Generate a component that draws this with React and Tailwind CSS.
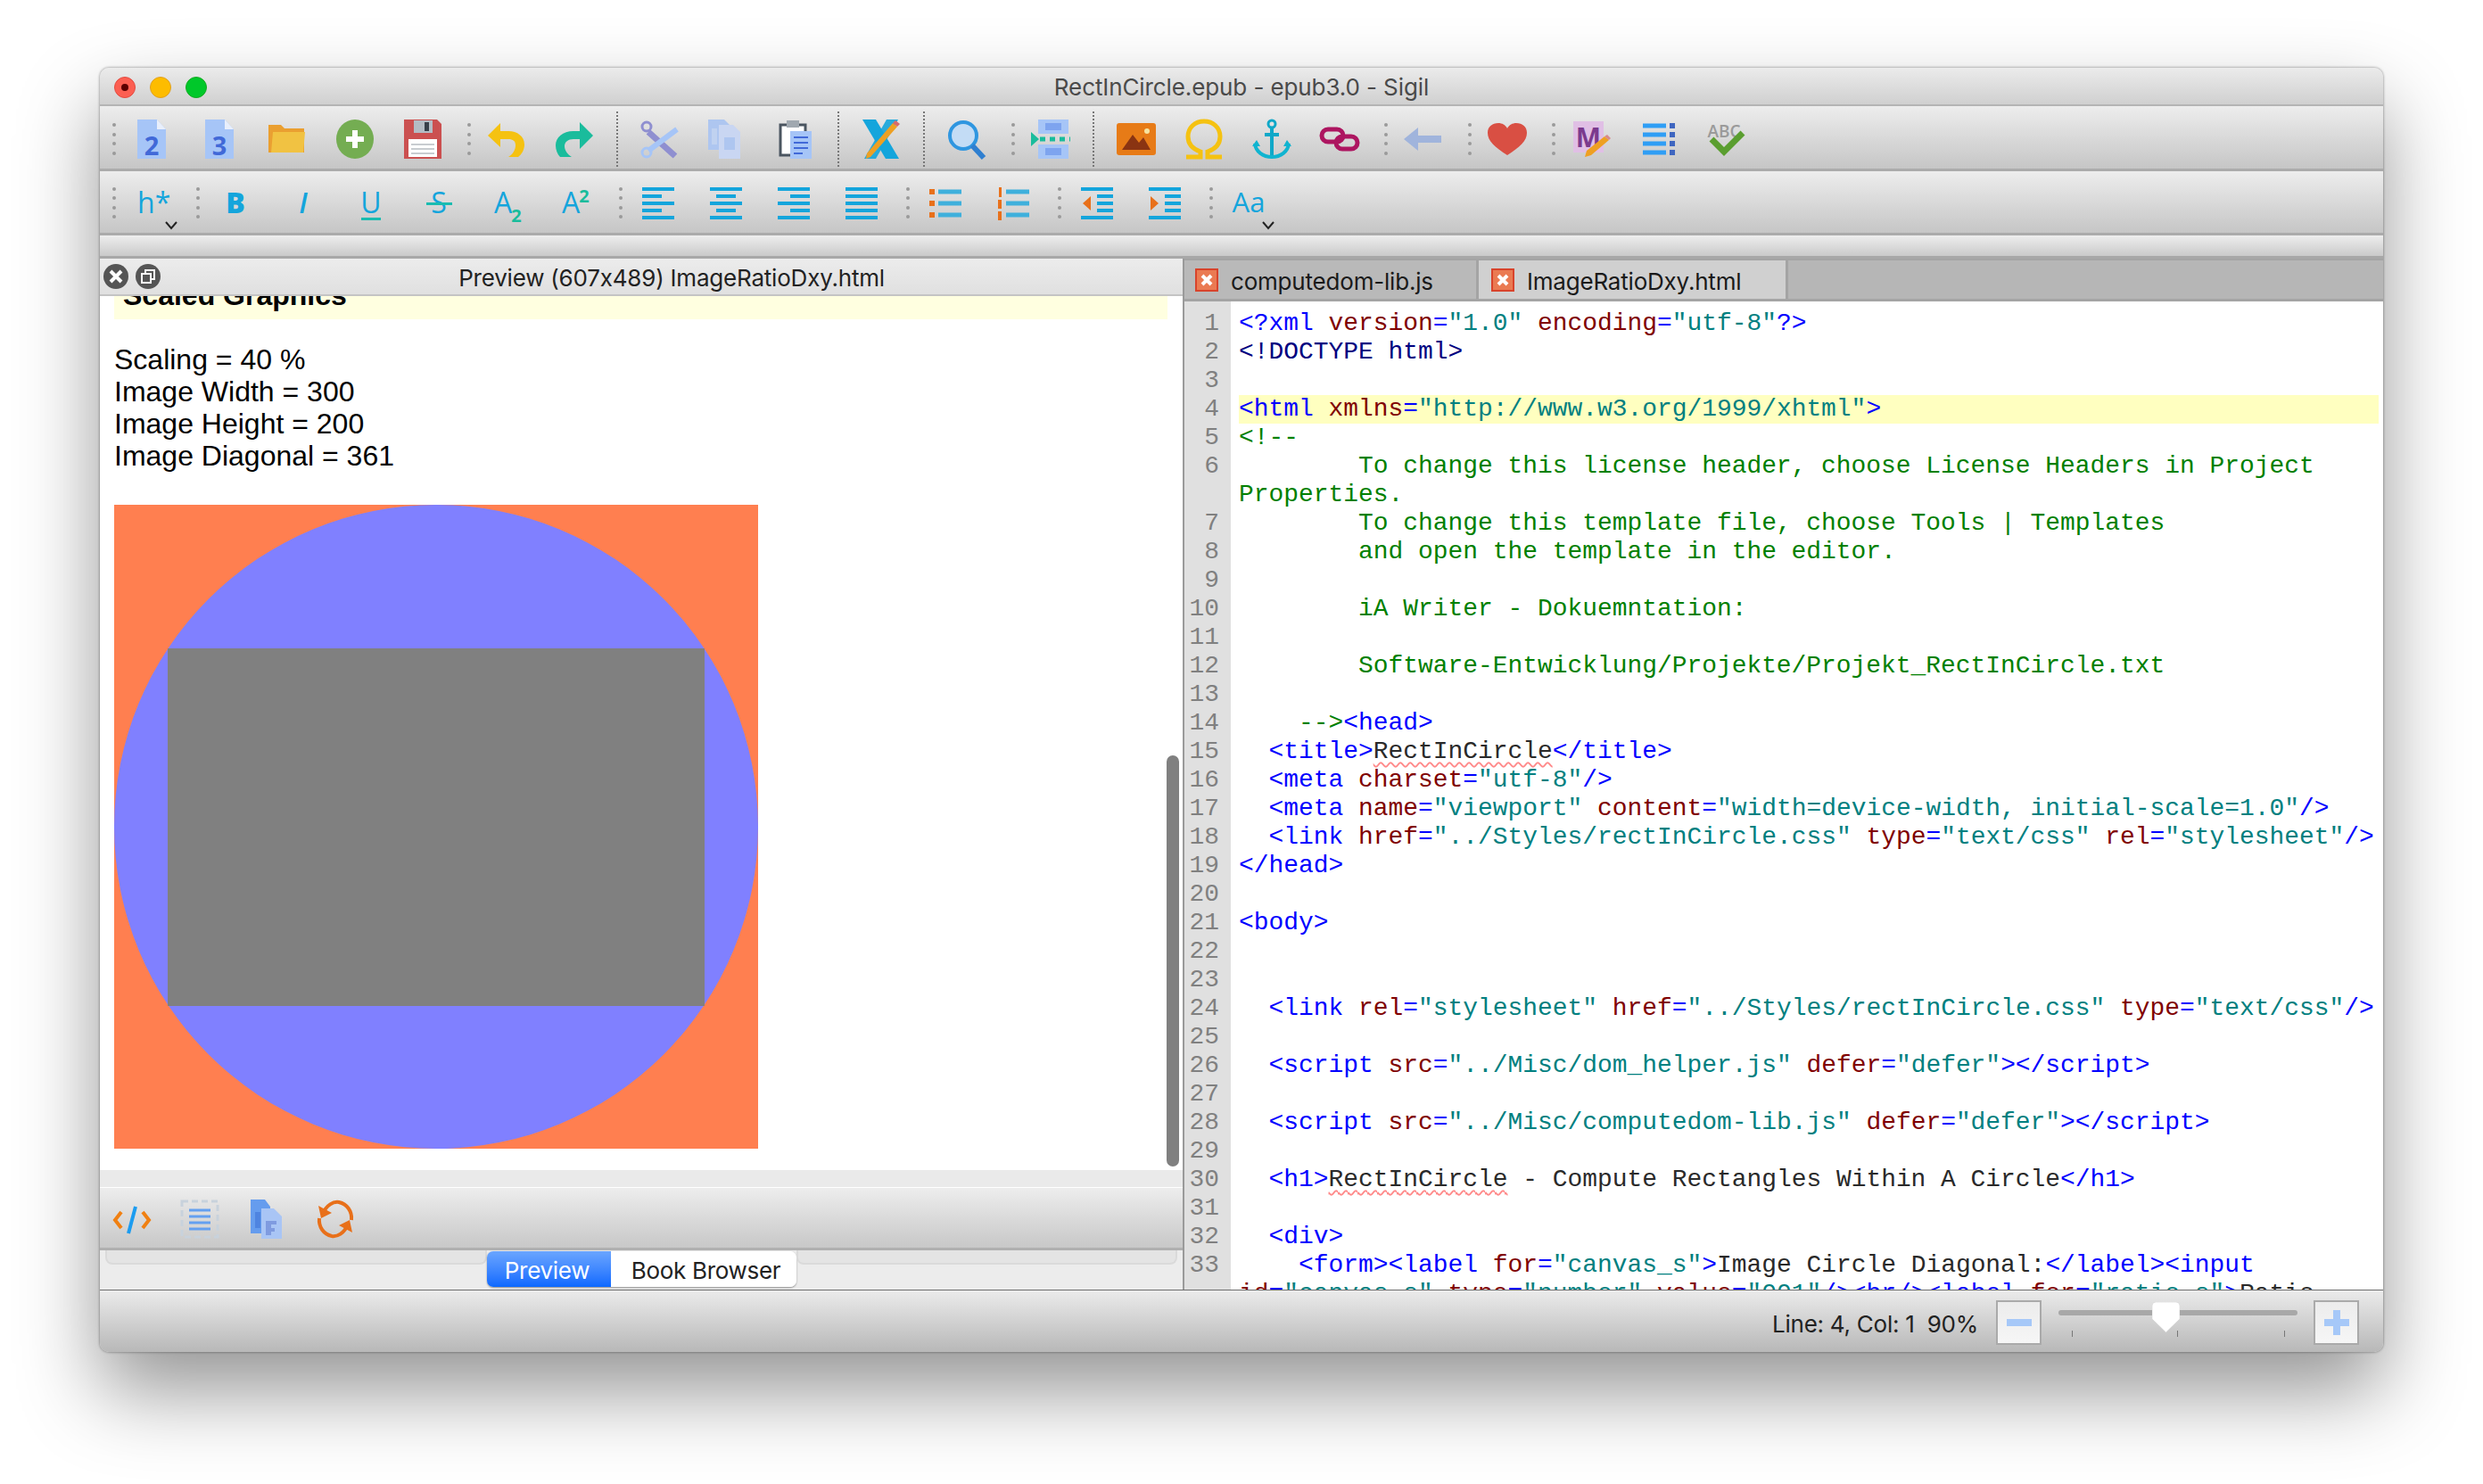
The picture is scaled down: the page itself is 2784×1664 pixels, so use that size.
const ui = "[font-family:Inter,sans-serif]";

const Grip = ({ first }) => (
  <div className={`flex flex-col justify-between h-[36px] w-[4px] ${first ? "ml-[14px]" : "ml-[28px]"} mr-[18px]`}>
    <i className="block w-[4px] h-[4px] rounded-full bg-[#9a9a9a]" />
    <i className="block w-[4px] h-[4px] rounded-full bg-[#9a9a9a]" />
    <i className="block w-[4px] h-[4px] rounded-full bg-[#9a9a9a]" />
    <i className="block w-[4px] h-[4px] rounded-full bg-[#9a9a9a]" />
  </div>
);

const Sep = () => (
  <div className="ml-[25px] mr-[25px] w-[2px] h-[62px] border-l-2 border-dotted border-[#777]" />
);

const Ico = ({ children }) => (
  <svg viewBox="0 0 44 44" className="w-[44px] h-[44px] shrink-0 overflow-visible">
    {children}
  </svg>
);

const Group = ({ children }) => <div className="flex gap-[32px]">{children}</div>;

const PageNum = ({ n }) => (
  <Ico>
    <path d="M6 0h22l10 11v33H6z" fill="#a6c5f7" />
    <path d="M28 0l10 11H28z" fill="#e9effb" />
    <text x="22" y="40" textAnchor="middle" fontFamily="Open Sans" fontWeight="700" fontSize="29" fill="#4169d8">{n}</text>
  </Ico>
);

const Folder = () => (
  <Ico>
    <path d="M1 6h14l4 4h22v27H1z" fill="#ea9f30" />
    <path d="M6 14h36l-2 23H4z" fill="#f1c242" />
  </Ico>
);

const AddGreen = () => (
  <Ico>
    <ellipse cx="22" cy="22" rx="21" ry="22" fill="#74ad52" />
    <path d="M22 12v20M12 22h20" stroke="#fff" strokeWidth="6" />
  </Ico>
);

const Save = () => (
  <Ico>
    <path d="M1 0h37l5 5v39H1z" fill="#cb5050" />
    <rect x="12" y="1" width="21" height="14" fill="#b4bcc4" />
    <rect x="24" y="3" width="5" height="10" fill="#37404a" />
    <rect x="6" y="22" width="32" height="20" fill="#fff" />
    <path d="M9 28h26M9 33h26M9 38h26" stroke="#c8ccd0" strokeWidth="2" />
  </Ico>
);

const Undo = () => (
  <Ico>
    <path d="M15 4v9h9c10 0 18 6 18 15 0 6-3 11-7 14H24c5-3 8-8 8-13 0-5-3-7-8-7h-9v9L1 18z" fill="#f5c211" />
  </Ico>
);

const Redo = () => (
  <Ico>
    <path d="M28 3v10h-7C9 13 1 20 1 29c0 5 2 10 5 13h13c-5-3-8-8-8-12 0-5 4-8 10-8h7v11l15-15z" fill="#1abc9c" />
  </Ico>
);

const Scissors = () => (
  <Ico>
    <path d="M9 14l30 27" stroke="#8f8fd0" strokeWidth="7" />
    <path d="M41 11L9 35" stroke="#a6c5f7" strokeWidth="6" />
    <circle cx="7" cy="8" r="5" fill="none" stroke="#8f8fd0" strokeWidth="3" />
    <circle cx="7" cy="37" r="5" fill="none" stroke="#a6c5f7" strokeWidth="3" />
  </Ico>
);

const CopyDim = () => (
  <Ico>
    <path d="M0 0h18l6 6v28H0z" fill="#aec6f0" />
    <path d="M12 6h16l8 8v30H12z" fill="#c9d6f2" />
    <path d="M18 20h12v14H18z" fill="#aec6f0" />
    <path d="M4 10h6v18H4z" fill="#c0d2f0" />
  </Ico>
);

const Paste = () => (
  <Ico>
    <path d="M5 6h28v34H5z" fill="#fff" stroke="#4a5560" strokeWidth="3" />
    <rect x="12" y="1" width="14" height="8" fill="#a0a8b0" />
    <rect x="16" y="13" width="24" height="31" fill="#a6c5f7" />
    <path d="M20 20h16M20 26h16M20 32h16M20 38h10" stroke="#4169d8" strokeWidth="2" />
  </Ico>
);

const XPencil = () => (
  <Ico>
    <path d="M1 0h15l26 44H27z" fill="#14a5dc" />
    <path d="M28 0h13L16 44H3z" fill="#14a5dc" opacity="0.9" />
    <path d="M35 4l5 4L10 42l-5 2 1-6z" fill="#eea022" />
    <path d="M35 4l3-3 5 4-3 3z" fill="#d86a6a" />
  </Ico>
);

const Search = () => (
  <Ico>
    <circle cx="18" cy="18" r="15" fill="#c3dcf5" stroke="#2f96e0" strokeWidth="4" />
    <path d="M28 29l13 14" stroke="#2f7fd0" strokeWidth="6" />
  </Ico>
);

const Meta = () => (
  <Ico>
    <rect x="8" y="0" width="34" height="16" fill="#a6c5f7" />
    <rect x="16" y="4" width="18" height="8" fill="#7ea4ef" />
    <rect x="8" y="28" width="34" height="16" fill="#a6c5f7" />
    <rect x="16" y="32" width="18" height="8" fill="#7ea4ef" />
    <path d="M0 14v16l9-8z" fill="#1abc9c" />
    <path d="M10 22h34" stroke="#1abc9c" strokeWidth="5" strokeDasharray="6 5" />
  </Ico>
);

const ImageIco = () => (
  <Ico>
    <rect x="0" y="4" width="44" height="36" rx="3" fill="#e77b17" />
    <path d="M6 34l12-17 7 9 5-6 8 14z" fill="#8a3412" />
    <circle cx="34" cy="13" r="3" fill="#f7e3a0" />
  </Ico>
);

const Omega = () => (
  <Ico>
    <path d="M2 42h16v-6C9 33 4 27 4 19 4 9 12 2 22 2s18 7 18 17c0 8-5 14-14 17v6h16" fill="none" stroke="#f5c211" strokeWidth="5" />
  </Ico>
);

const AnchorIco = () => (
  <Ico>
    <circle cx="22" cy="5" r="4" fill="none" stroke="#10a8c8" strokeWidth="3" />
    <path d="M22 9v33M14 17h16" stroke="#10a8c8" strokeWidth="4" />
    <path d="M3 27c1 9 9 15 19 15s18-6 19-15" fill="none" stroke="#10b4d0" strokeWidth="4" />
    <path d="M0 30l5-7 4 7zM44 30l-5-7-4 7z" fill="#10b4d0" />
  </Ico>
);

const LinkIco = () => (
  <Ico>
    <rect x="2" y="11" width="24" height="14" rx="7" fill="none" stroke="#ad1560" strokeWidth="5" />
    <rect x="18" y="19" width="24" height="14" rx="7" fill="none" stroke="#ad1560" strokeWidth="5" />
  </Ico>
);

const ArrowBack = () => (
  <Ico>
    <path d="M0 22L16 9v9h26v8H16v9z" fill="#a0b4dc" />
  </Ico>
);

const Heart = () => (
  <Ico>
    <path d="M22 40C8 31 0 24 0 15 0 8 5 4 12 4c4 0 8 2 10 6 2-4 6-6 10-6 7 0 12 4 12 11 0 9-8 16-22 25z" fill="#d94f43" />
  </Ico>
);

const MEdit = () => (
  <Ico>
    <rect x="2" y="2" width="34" height="35" fill="#e0bfe5" />
    <text x="19" y="31" textAnchor="middle" fontFamily="Open Sans" fontWeight="700" fontSize="30" fill="#7b3a8e">M</text>
    <path d="M37 19l5 4-20 17-7 2 2-7z" fill="#eea022" />
    <path d="M37 19l3-2 4 4-2 2z" fill="#d88a8a" />
  </Ico>
);

const TocIco = () => (
  <Ico>
    <path d="M4 7h26M4 17h26M4 27h26M4 37h26" stroke="#2f9ef5" strokeWidth="5" />
    <path d="M34 4h6v6h-6zM34 14h6v6h-6zM34 24h6v6h-6zM34 34h6v6h-6z" fill="#3f66c0" />
  </Ico>
);

const Spell = () => (
  <Ico>
    <text x="19" y="20" textAnchor="middle" fontFamily="Open Sans" fontWeight="600" fontSize="19" fill="#9a9a9a">ABC</text>
    <path d="M5 22l14 14 21-21" fill="none" stroke="#5a9e2f" strokeWidth="7" />
  </Ico>
);

const Chevron = ({ x }) => (
  <path d={`M${x - 6} 43l6 7 6-7`} fill="none" stroke="#222" strokeWidth="2" />
);

const Head = () => (
  <Ico>
    <text x="6" y="33" fontFamily="Open Sans" fontSize="32" fill="#14a5dc">h*</text>
    <Chevron x={44} />
  </Ico>
);

const Letter = ({ ch, weight, style }) => (
  <text x="22" y="33" textAnchor="middle" fontFamily="Open Sans" fontWeight={weight} fontStyle={style} fontSize="32" fill="#14a5dc">{ch}</text>
);

const Bold = () => <Ico><Letter ch="B" weight="800" /></Ico>;
const Italic = () => <Ico><Letter ch="I" weight="600" style="italic" /></Ico>;
const Under = () => (
  <Ico>
    <Letter ch="U" weight="400" />
    <rect x="11" y="38" width="22" height="3" fill="#1abcb0" />
  </Ico>
);
const Strike = () => (
  <Ico>
    <Letter ch="S" weight="400" />
    <rect x="8" y="21" width="29" height="3" fill="#1abcb0" />
  </Ico>
);
const Sub = () => (
  <Ico>
    <text x="18" y="33" textAnchor="middle" fontFamily="Open Sans" fontSize="32" fill="#14a5dc">A</text>
    <text x="33" y="43" textAnchor="middle" fontFamily="Open Sans" fontWeight="700" fontSize="20" fill="#1abc9c">2</text>
  </Ico>
);
const Sup = () => (
  <Ico>
    <text x="18" y="33" textAnchor="middle" fontFamily="Open Sans" fontSize="32" fill="#14a5dc">A</text>
    <text x="33" y="21" textAnchor="middle" fontFamily="Open Sans" fontWeight="700" fontSize="20" fill="#1abc9c">2</text>
  </Ico>
);

const Bars = ({ mode }) => {
  const short = { left: [4, 22], center: [11, 22], right: [18, 22], full: [4, 36] }[mode];
  return (
    <Ico>
      {[4, 12, 20, 28, 36].map((y, i) =>
        i % 2 ? (
          <rect key={y} x={short[0]} y={y} width={short[1]} height="4" fill="#14a5dc" />
        ) : (
          <rect key={y} x="4" y={y} width="36" height="4" fill="#14a5dc" />
        )
      )}
    </Ico>
  );
};

const Bullets = () => (
  <Ico>
    <path d="M4 6h6v6H4zM4 19h6v6H4zM4 32h6v6H4z" fill="#e8701a" />
    <path d="M14 9h26M14 22h26M14 35h26" stroke="#3fb0dc" strokeWidth="5" />
  </Ico>
);

const Numbered = () => (
  <Ico>
    <path d="M6 4h3v11H6zM5 18h4v10H5zM5 31h4v10H5z" fill="#e8701a" />
    <path d="M14 9h26M14 22h26M14 35h26" stroke="#3fb0dc" strokeWidth="5" />
  </Ico>
);

const Outdent = () => (
  <Ico>
    <path d="M4 6h36M22 14h18M22 22h18M22 30h18M4 38h36" stroke="#14a5dc" strokeWidth="4" />
    <path d="M6 22l9-8v16z" fill="#e8701a" />
  </Ico>
);

const Indent = () => (
  <Ico>
    <path d="M4 6h36M22 14h18M22 22h18M22 30h18M4 38h36" stroke="#14a5dc" strokeWidth="4" />
    <path d="M15 22l-9-8v16z" fill="#e8701a" />
  </Ico>
);

const Case = () => (
  <Ico>
    <text x="22" y="32" textAnchor="middle" fontFamily="Open Sans" fontSize="31" fill="#14a5dc">Aa</text>
    <Chevron x={44} />
  </Ico>
);

const CodeIco = () => (
  <Ico>
    <path d="M10 14l-7 9 7 9M34 14l7 9-7 9" fill="none" stroke="#f08012" strokeWidth="4" />
    <path d="M26 8l-8 30" stroke="#1c9cf0" strokeWidth="4" />
  </Ico>
);

const ListDash = () => (
  <Ico>
    <rect x="2" y="2" width="40" height="40" fill="none" stroke="#c8d2dc" strokeWidth="3" strokeDasharray="7 4" />
    <path d="M10 12h24M10 19h24M10 26h24M10 33h24" stroke="#64a0f0" strokeWidth="3" />
  </Ico>
);

const CopyBlue = () => (
  <Ico>
    <path d="M3 0h16l6 8v30H3z" fill="#659cee" />
    <path d="M15 10h14l9 9v25H15z" fill="#a9c5f5" />
    <path d="M20 24h12v4h-6v4h4v4h-4v4h-6z" fill="#7f9be0" />
    <path d="M8 14h6v18H8z" fill="#4f84e0" />
  </Ico>
);

const Refresh = () => (
  <Ico>
    <path d="M8 16C12 6 20 2 26 3c9 2 15 10 14 20M36 28c-4 10-12 14-18 13C9 39 3 31 4 21" fill="none" stroke="#e8701a" strokeWidth="4" />
    <path d="M3 7l3 14 12-6zM41 37l-3-14-12 6z" fill="#e8701a" />
  </Ico>
);

const CloseTab = () => (
  <svg viewBox="0 0 26 26" className="w-[26px] h-[26px] shrink-0">
    <rect x="1" y="1" width="24" height="24" fill="#ea7a52" stroke="#d8432b" strokeWidth="2" />
    <path d="M8 8l10 10M18 8L8 18" stroke="#fff" strokeWidth="4" />
  </svg>
);

const T = ({ children }) => <span className="text-[#0000ff]">{children}</span>;
const A = ({ children }) => <span className="text-[#800000]">{children}</span>;
const V = ({ children }) => <span className="text-[#008080]">{children}</span>;
const C = ({ children }) => <span className="text-[#008000]">{children}</span>;
const D = ({ children }) => <span className="text-[#000080]">{children}</span>;
const Sq = ({ children }) => (
  <span className="underline decoration-wavy decoration-[#ff8a8a] decoration-2 underline-offset-[4px]">{children}</span>
);

const lines = [
  [1, <><T>{"<?xml "}</T><A>version</A><T>=</T><V>"1.0"</V> <A>encoding</A><T>=</T><V>"utf-8"</V><T>{"?>"}</T></>],
  [2, <><D>{"<!DOCTYPE html>"}</D></>],
  [3, null],
  [4, <><T>{"<html "}</T><A>xmlns</A><T>=</T><V>"http://www.w3.org/1999/xhtml"</V><T>{">"}</T></>],
  [5, <C>{"<!--"}</C>],
  [6, <C>{"        To change this license header, choose License Headers in Project"}</C>],
  ["", <C>Properties.</C>],
  [7, <C>{"        To change this template file, choose Tools | Templates"}</C>],
  [8, <C>{"        and open the template in the editor."}</C>],
  [9, null],
  [10, <C>{"        iA Writer - Dokuemntation:"}</C>],
  [11, null],
  [12, <C>{"        Software-Entwicklung/Projekte/Projekt_RectInCircle.txt"}</C>],
  [13, null],
  [14, <><C>{"    -->"}</C><T>{"<head>"}</T></>],
  [15, <>{"  "}<T>{"<title>"}</T><Sq>RectInCircle</Sq><T>{"</title>"}</T></>],
  [16, <>{"  "}<T>{"<meta "}</T><A>charset</A><T>=</T><V>"utf-8"</V><T>{"/>"}</T></>],
  [17, <>{"  "}<T>{"<meta "}</T><A>name</A><T>=</T><V>"viewport"</V> <A>content</A><T>=</T><V>"width=device-width, initial-scale=1.0"</V><T>{"/>"}</T></>],
  [18, <>{"  "}<T>{"<link "}</T><A>href</A><T>=</T><V>"../Styles/rectInCircle.css"</V> <A>type</A><T>=</T><V>"text/css"</V> <A>rel</A><T>=</T><V>"stylesheet"</V><T>{"/>"}</T></>],
  [19, <T>{"</head>"}</T>],
  [20, null],
  [21, <T>{"<body>"}</T>],
  [22, null],
  [23, null],
  [24, <>{"  "}<T>{"<link "}</T><A>rel</A><T>=</T><V>"stylesheet"</V> <A>href</A><T>=</T><V>"../Styles/rectInCircle.css"</V> <A>type</A><T>=</T><V>"text/css"</V><T>{"/>"}</T></>],
  [25, null],
  [26, <>{"  "}<T>{"<script "}</T><A>src</A><T>=</T><V>"../Misc/dom_helper.js"</V> <A>defer</A><T>=</T><V>"defer"</V><T>{"></script>"}</T></>],
  [27, null],
  [28, <>{"  "}<T>{"<script "}</T><A>src</A><T>=</T><V>"../Misc/computedom-lib.js"</V> <A>defer</A><T>=</T><V>"defer"</V><T>{"></script>"}</T></>],
  [29, null],
  [30, <>{"  "}<T>{"<h1>"}</T><Sq>RectInCircle</Sq>{" - Compute Rectangles Within A Circle"}<T>{"</h1>"}</T></>],
  [31, null],
  [32, <>{"  "}<T>{"<div>"}</T></>],
  [33, <>{"    "}<T>{"<form><label "}</T><A>for</A><T>=</T><V>"canvas_s"</V><T>{">"}</T>{"Image Circle Diagonal:"}<T>{"</label><input"}</T></>],
  ["", <><A>id</A><T>=</T><V>"canvas_s"</V> <A>type</A><T>=</T><V>"number"</V> <A>value</A><T>=</T><V>"001"</V><T>{"/><br/><label "}</T><A>for</A><T>=</T><V>"ratio_s"</V><T>{">"}</T>{"Ratio"}</>],
];

const App = () => {
  return (
    <div className={`w-[2784px] h-[1664px] bg-white overflow-hidden pl-[112px] pt-[76px] ${ui}`}>
      <div className="w-[2560px] h-[1440px] rounded-[10px] overflow-hidden flex flex-col bg-[#ececec] shadow-[0_44px_90px_rgba(0,0,0,0.42),0_0_3px_rgba(0,0,0,0.5)]">
        {/* title bar */}
        <div className="h-[43px] shrink-0 grid grid-cols-[1fr_auto_1fr] items-center pt-[2px] bg-gradient-to-b from-[#ebebeb] to-[#d0d0d0] border-b-2 border-[#b4b4b4]">
          <div className="flex gap-[16px] pl-[16px]">
            <div className="w-[24px] h-[24px] rounded-full bg-[#fc5f52] border border-[#e24b40] flex items-center justify-center">
              <i className="block w-[8px] h-[8px] rounded-full bg-[#5c0000]" />
            </div>
            <div className="w-[24px] h-[24px] rounded-full bg-[#fdbc00] border border-[#e0a020]" />
            <div className="w-[24px] h-[24px] rounded-full bg-[#00c82a] border border-[#10aa20]" />
          </div>
          <div className="text-[26px] text-[#4a4a4a] tracking-[-0.1px]">RectInCircle.epub - epub3.0 - Sigil</div>
          <div />
        </div>

        {/* main toolbar */}
        <div className="h-[73px] shrink-0 flex items-center pt-[4px] bg-gradient-to-b from-[#ededed] to-[#c6c6c6] border-b-[3px] border-[#ababab]">
          <Grip first />
          <Group>
            <PageNum n="2" />
            <PageNum n="3" />
            <Folder />
            <AddGreen />
            <Save />
          </Group>
          <Grip />
          <Group>
            <Undo />
            <Redo />
          </Group>
          <Sep />
          <Group>
            <Scissors />
            <CopyDim />
            <Paste />
          </Group>
          <Sep />
          <XPencil />
          <Sep />
          <Search />
          <Grip />
          <Meta />
          <Sep />
          <Group>
            <ImageIco />
            <Omega />
            <AnchorIco />
            <LinkIco />
          </Group>
          <Grip />
          <ArrowBack />
          <Grip />
          <Heart />
          <Grip />
          <Group>
            <MEdit />
            <TocIco />
            <Spell />
          </Group>
        </div>

        {/* format toolbar */}
        <div className="h-[72px] shrink-0 flex items-center pt-[2px] bg-gradient-to-b from-[#ededed] to-[#c6c6c6] border-b-[3px] border-[#ababab]">
          <Grip first />
          <Head />
          <Grip />
          <Group>
            <Bold />
            <Italic />
            <Under />
            <Strike />
            <Sub />
            <Sup />
          </Group>
          <Grip />
          <Group>
            <Bars mode="left" />
            <Bars mode="center" />
            <Bars mode="right" />
            <Bars mode="full" />
          </Group>
          <Grip />
          <Group>
            <Bullets />
            <Numbered />
          </Group>
          <Grip />
          <Group>
            <Outdent />
            <Indent />
          </Group>
          <Grip />
          <Case />
        </div>

        <div className="h-[26px] shrink-0 bg-gradient-to-b from-[#eeeeee] to-[#cacaca] border-b-[3px] border-[#a8a8a8]" />

        {/* panels */}
        <div className="flex h-[1156px] shrink-0 min-h-0">
          <div className="w-[1216px] shrink-0 flex flex-col border-r-2 border-[#9a9a9a]">
            <div className="h-[42px] shrink-0 flex items-center bg-gradient-to-b from-[#ececec] to-[#e0e0e0] border-b-2 border-[#c4c4c4]">
              <div className="flex gap-[8px] pl-[4px] w-[68px]">
                <div className="w-[28px] h-[28px] rounded-full bg-[#555] flex items-center justify-center">
                  <svg viewBox="0 0 16 16" className="w-[16px] h-[16px]">
                    <path d="M2 2l12 12M14 2L2 14" stroke="#fff" strokeWidth="4" />
                  </svg>
                </div>
                <div className="w-[28px] h-[28px] rounded-full bg-[#555] flex items-center justify-center">
                  <svg viewBox="0 0 16 16" className="w-[16px] h-[16px]">
                    <path d="M5 1h10v10H5z" fill="none" stroke="#fff" strokeWidth="2" />
                    <path d="M1 5h10v10H1z" fill="#555" stroke="#fff" strokeWidth="2" />
                  </svg>
                </div>
              </div>
              <div className="flex-1 text-center pt-[3px] text-[26px] text-[#222] tracking-[-0.2px]">Preview (607x489) ImageRatioDxy.html</div>
            </div>

            <div className="relative h-[980px] shrink-0 overflow-hidden bg-white pl-[16px] [font-family:'Liberation_Sans',sans-serif] text-black">
              <div className="-mt-[26px] mr-[2px] w-[1181px] h-[52px] flex items-end pb-[9px] pl-[10px] bg-[#ffffe0] text-[32px] leading-[36px] font-bold">
                Scaled Graphics
              </div>
              <div className="mt-[27px] text-[32px] leading-[36px]">
                <div>Scaling = 40 %</div>
                <div>Image Width = 300</div>
                <div>Image Height = 200</div>
                <div>Image Diagonal = 361</div>
              </div>
              <div className="mt-[37px] w-[722px] h-[722px] bg-[#ff7f50]">
                <div className="w-full h-full rounded-full bg-[#8080ff] flex items-center justify-center">
                  <div className="w-[602px] h-[401px] bg-[#808080]" />
                </div>
              </div>
              <div className="absolute left-[1196px] top-[515px] w-[14px] h-[461px] rounded-full bg-[#808080]" />
            </div>

            <div className="h-[20px] shrink-0 bg-[#eaeaea] border-b border-white" />
            <div className="h-[70px] shrink-0 flex items-center gap-[32px] pl-[14px] pt-[3px] bg-gradient-to-b from-[#ededed] to-[#c8c8c8] border-b-[3px] border-[#b0b0b0]">
              <CodeIco />
              <ListDash />
              <CopyBlue />
              <Refresh />
            </div>
            <div className="h-[44px] shrink-0 flex items-start px-[6px] bg-[#ececec]">
              <div className="flex-1 h-[16px] bg-[#e4e4e4] border-b-2 border-x-2 border-[#dadada] rounded-b-[8px]" />
              <div className="flex h-[40px] mt-[1px] rounded-[7px] overflow-hidden shadow-[0_1px_2px_rgba(0,0,0,0.4)] text-[26px] tracking-[-0.3px] leading-[43px]">
                <div className="w-[139px] text-center pr-[3px] text-white bg-gradient-to-b from-[#6aa5ff] to-[#0a68ff]">Preview</div>
                <div className="w-[208px] text-center pl-[6px] text-[#222] bg-white">Book Browser</div>
              </div>
              <div className="flex-1 h-[16px] bg-[#e4e4e4] border-b-2 border-x-2 border-[#dadada] rounded-b-[8px]" />
            </div>
          </div>

          <div className="flex-1 min-w-0 flex flex-col bg-white">
            <div className="h-[48px] shrink-0 flex items-end bg-[#b6b6b6] border-t-2 border-b-[3px] border-[#a4a4a4] text-[26px] text-[#1a1a1a] tracking-[-0.2px]">
              <div className="w-[330px] h-full flex items-center gap-[14px] pl-[12px] bg-[#b9b9b9] border-r-[3px] border-[#a4a4a4]">
                <CloseTab />
                <span className="pt-[3px]">computedom-lib.js</span>
              </div>
              <div className="w-[347px] h-full flex items-center gap-[14px] pl-[14px] bg-[#d0d0d0] border-r-[3px] border-[#a4a4a4]">
                <CloseTab />
                <span className="pt-[3px]">ImageRatioDxy.html</span>
              </div>
            </div>
            <div className="flex-1 min-h-0 overflow-hidden relative pt-[9px] bg-white [font-family:'Liberation_Mono',monospace] text-[27.92px] leading-[32px] text-[#2a2a2a] before:absolute before:inset-y-0 before:left-0 before:w-[52px] before:bg-[#e0e0e0]">
              {lines.map(([n, code], i) => (
                <div key={i} className="relative flex h-[32px]">
                  <div className="w-[52px] shrink-0 text-right pr-[13px] text-[#808080]">{n}</div>
                  <div className={`flex-1 ml-[9px] mr-[5px] whitespace-pre ${n === 4 ? "bg-[#ffffc0]" : ""}`}>{code}</div>
                </div>
              ))}
            </div>
          </div>
        </div>

        {/* status bar */}
        <div className="h-[70px] shrink-0 flex items-center justify-end pr-[27px] pt-[3px] bg-gradient-to-b from-[#ebebeb] to-[#b8b8b8] border-t border-[#6e6e6e] text-[26px] text-[#222] tracking-[-0.25px]">
          <span className="whitespace-pre mr-[20px] pt-[3px]">Line: 4, Col: 1  90%</span>
          <button className="w-[51px] h-[50px] flex items-center justify-center bg-gradient-to-b from-[#ececec] to-[#f6f6f6] border-2 border-[#aaa]">
            <svg viewBox="0 0 28 28" className="w-[28px] h-[28px]">
              <rect x="0" y="10" width="28" height="8" fill="#a6c8f8" />
            </svg>
          </button>
          <div className="relative w-[305px] h-[50px]">
            <div className="absolute left-[19px] right-[18px] top-[11px] h-[6px] rounded-full bg-[#a8a8a8]" />
            <i className="absolute left-[34px] top-[34px] w-[1px] h-[7px] bg-[#777]" />
            <i className="absolute left-[152px] top-[34px] w-[1px] h-[7px] bg-[#777]" />
            <i className="absolute left-[272px] top-[34px] w-[1px] h-[7px] bg-[#777]" />
            <svg viewBox="0 0 31 34" className="absolute left-[124px] top-[2px] w-[31px] h-[34px]">
              <path d="M4 0h23a4 4 0 0 1 4 4v15L15.500 34 0 19V4a4 4 0 0 1 4-4z" fill="#fff" stroke="#c8c8c8" strokeWidth="0.5" />
            </svg>
          </div>
          <button className="w-[51px] h-[50px] flex items-center justify-center bg-gradient-to-b from-[#ececec] to-[#f6f6f6] border-2 border-[#aaa]">
            <svg viewBox="0 0 28 28" className="w-[28px] h-[28px]">
              <path d="M0 10h10V0h8v10h10v8H18v10h-8V18H0z" fill="#a6c8f8" />
            </svg>
          </button>
        </div>
      </div>
    </div>
  );
};

export default App;
